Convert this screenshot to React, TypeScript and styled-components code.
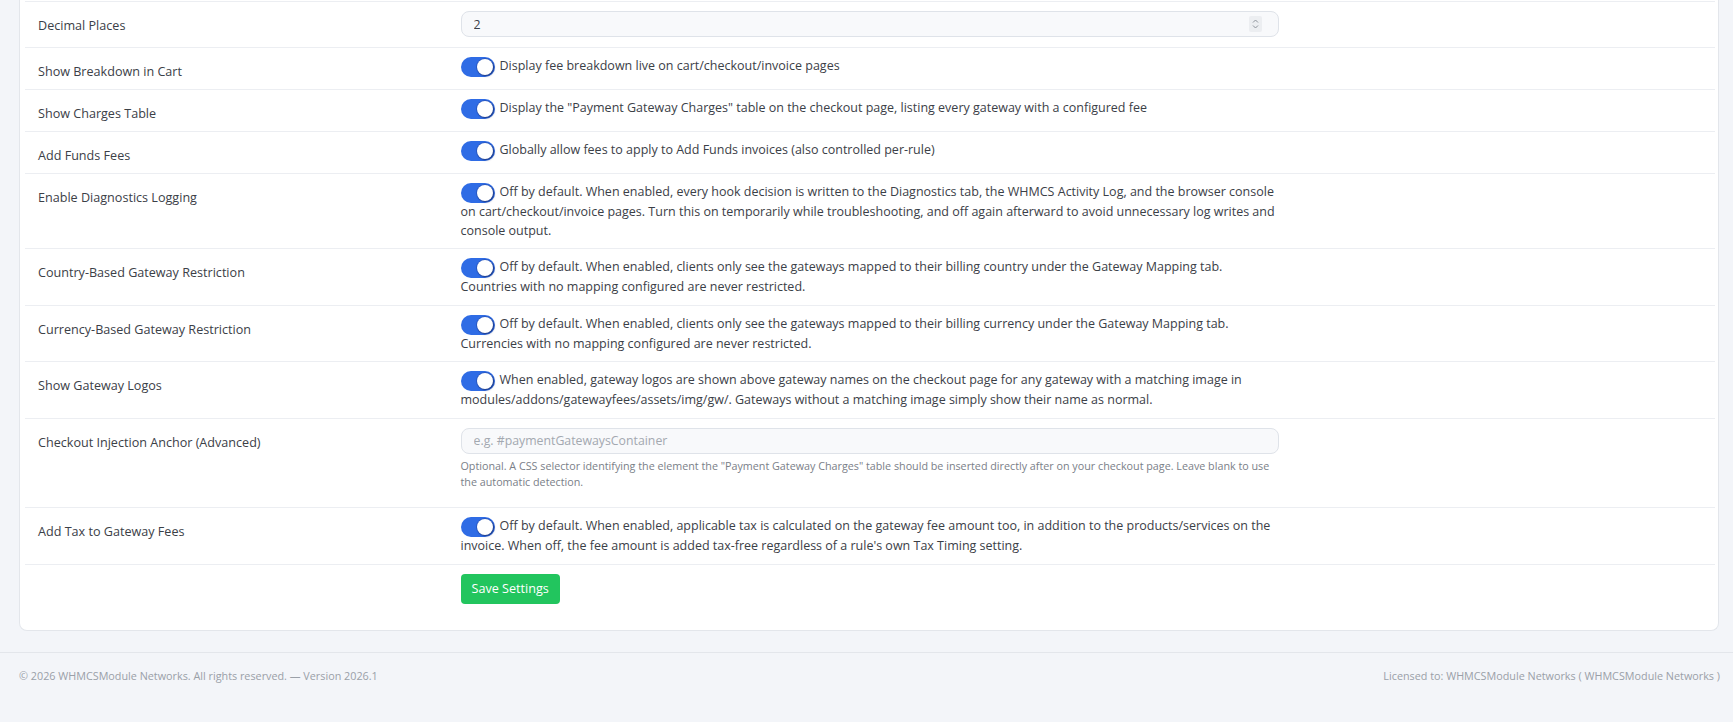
import { FC } from "react"
import styled, { createGlobalStyle } from "styled-components"

const GlobalStyle = createGlobalStyle`
  html, body {
    margin: 0;
    padding: 0;
    background: #f3f5f9;
  }
  body {
    font-family: "Open Sans", "Noto Sans", sans-serif;
    font-size: 12.6px;
    color: #3b4047;
  }
  * {
    box-sizing: border-box;
  }
`

const Page = styled.div`
  min-height: 722px;
  display: flex;
  flex-direction: column;
`

const Content = styled.main`
  padding: 0 14px 0 19px;
`

const Card = styled.section`
  background: #fff;
  border: 1px solid #e3e6eb;
  border-top: none;
  border-radius: 0 0 8px 8px;
  padding: 1px 3px 17.5px 5px;
`

const SettingRow = styled.div`
  display: grid;
  grid-template-columns: 25% 75%;
  border-top: 1px solid #eceef2;
`

const LabelCell = styled.div`
  padding: 14px 13px 7.5px;
  line-height: 19.5px;
  color: #3b4047;
`

const ValueCell = styled.div<{ $roomy?: boolean }>`
  padding: ${(p) => (p.$roomy ? "9px 13px 10px" : "9px 13px 8px")};
  min-width: 0;
`

const ValueInner = styled.div`
  max-width: 820px;
  position: relative;
`

const Description = styled.label`
  display: block;
  font-size: 12.5px;
  line-height: 18.5px;
  color: #3b4047;
`

const Track = styled.span`
  display: inline-flex;
  justify-content: flex-end;
  align-items: center;
  vertical-align: top;
  width: 34px;
  height: 20px;
  padding: 2px;
  margin-right: 5px;
  border-radius: 10px;
  background: #2f6ce5;
`

const Knob = styled.span`
  width: 16px;
  height: 16px;
  border-radius: 50%;
  background: #fff;
  box-shadow: 1px 1px 2px rgba(16, 30, 84, 0.6), 0 0 0 1px rgba(34, 60, 140, 0.35);
`

const TextField = styled.input`
  display: block;
  width: 818px;
  max-width: 100%;
  height: 26px;
  padding: 0 12px;
  border: 1px solid #dfe3e9;
  border-radius: 8px;
  background: #f8f9fb;
  font-family: inherit;
  font-size: 12.3px;
  color: #3b4047;
  outline: none;

  &::placeholder {
    color: #a3a8b0;
  }
`

const Spinner = styled.span`
  position: absolute;
  left: 788px;
  top: 5px;
  width: 13px;
  height: 16px;
  border-radius: 2px;
  background: #eceef1;
  display: flex;
  align-items: center;
  justify-content: center;
`

const HelpText = styled.div`
  margin: 4px 0 9.5px;
  font-size: 10.75px;
  line-height: 16px;
  color: #7a8088;
`

const SaveButton = styled.button`
  height: 30.5px;
  padding: 0 11px;
  border: none;
  border-radius: 4px;
  background: #22c55e;
  color: #fff;
  font-family: inherit;
  font-size: 12.6px;
  cursor: pointer;
`

const Footer = styled.footer`
  margin-top: 21px;
  border-top: 1px solid #e3e6eb;
  padding: 14px 13px 0 19px;
  display: flex;
  justify-content: space-between;
  font-size: 10.8px;
  line-height: 18px;
  color: #9aa0a8;
`

type Setting =
  | { kind: "number"; label: string; value: string }
  | { kind: "toggle"; label: string; text: string }
  | { kind: "text"; label: string; placeholder: string; help: string }

const settings: Setting[] = [
  { kind: "number", label: "Decimal Places", value: "2" },
  {
    kind: "toggle",
    label: "Show Breakdown in Cart",
    text: "Display fee breakdown live on cart/checkout/invoice pages",
  },
  {
    kind: "toggle",
    label: "Show Charges Table",
    text: 'Display the "Payment Gateway Charges" table on the checkout page, listing every gateway with a configured fee',
  },
  {
    kind: "toggle",
    label: "Add Funds Fees",
    text: "Globally allow fees to apply to Add Funds invoices (also controlled per-rule)",
  },
  {
    kind: "toggle",
    label: "Enable Diagnostics Logging",
    text: "Off by default. When enabled, every hook decision is written to the Diagnostics tab, the WHMCS Activity Log, and the browser console on cart/checkout/invoice pages. Turn this on temporarily while troubleshooting, and off again afterward to avoid unnecessary log writes and console output.",
  },
  {
    kind: "toggle",
    label: "Country-Based Gateway Restriction",
    text: "Off by default. When enabled, clients only see the gateways mapped to their billing country under the Gateway Mapping tab. Countries with no mapping configured are never restricted.",
  },
  {
    kind: "toggle",
    label: "Currency-Based Gateway Restriction",
    text: "Off by default. When enabled, clients only see the gateways mapped to their billing currency under the Gateway Mapping tab. Currencies with no mapping configured are never restricted.",
  },
  {
    kind: "toggle",
    label: "Show Gateway Logos",
    text: "When enabled, gateway logos are shown above gateway names on the checkout page for any gateway with a matching image in modules/addons/gatewayfees/assets/img/gw/. Gateways without a matching image simply show their name as normal.",
  },
  {
    kind: "text",
    label: "Checkout Injection Anchor (Advanced)",
    placeholder: "e.g. #paymentGatewaysContainer",
    help: 'Optional. A CSS selector identifying the element the "Payment Gateway Charges" table should be inserted directly after on your checkout page. Leave blank to use the automatic detection.',
  },
  {
    kind: "toggle",
    label: "Add Tax to Gateway Fees",
    text: "Off by default. When enabled, applicable tax is calculated on the gateway fee amount too, in addition to the products/services on the invoice. When off, the fee amount is added tax-free regardless of a rule's own Tax Timing setting.",
  },
]

const Toggle: FC = () => (
  <Track>
    <Knob />
  </Track>
)

const SpinArrows: FC = () => (
  <Spinner>
    <svg width="7" height="12" viewBox="0 0 7 12" fill="none" stroke="#8d939b" strokeWidth="1">
      <path d="M1 4.5 3.5 2 6 4.5" />
      <path d="M1 7.5 3.5 10 6 7.5" />
    </svg>
  </Spinner>
)

const SettingControl: FC<{ setting: Setting }> = ({ setting }) => {
  switch (setting.kind) {
    case "number":
      return (
        <ValueInner>
          <TextField defaultValue={setting.value} />
          <SpinArrows />
        </ValueInner>
      )
    case "toggle":
      return (
        <ValueInner>
          <Description>
            <Toggle />
            {setting.text}
          </Description>
        </ValueInner>
      )
    case "text":
      return (
        <ValueInner>
          <TextField placeholder={setting.placeholder} />
          <HelpText>{setting.help}</HelpText>
        </ValueInner>
      )
  }
}

export default function App() {
  return (
    <Page>
      <GlobalStyle />
      <Content>
        <Card>
          {settings.map((s) => (
            <SettingRow key={s.label}>
              <LabelCell>{s.label}</LabelCell>
              <ValueCell $roomy={s.kind === "number"}>
                <SettingControl setting={s} />
              </ValueCell>
            </SettingRow>
          ))}
          <SettingRow>
            <LabelCell />
            <ValueCell>
              <SaveButton>Save Settings</SaveButton>
            </ValueCell>
          </SettingRow>
        </Card>
      </Content>
      <Footer>
        <span>© 2026 WHMCSModule Networks. All rights reserved. — Version 2026.1</span>
        <span>Licensed to: WHMCSModule Networks ( WHMCSModule Networks )</span>
      </Footer>
    </Page>
  )
}
